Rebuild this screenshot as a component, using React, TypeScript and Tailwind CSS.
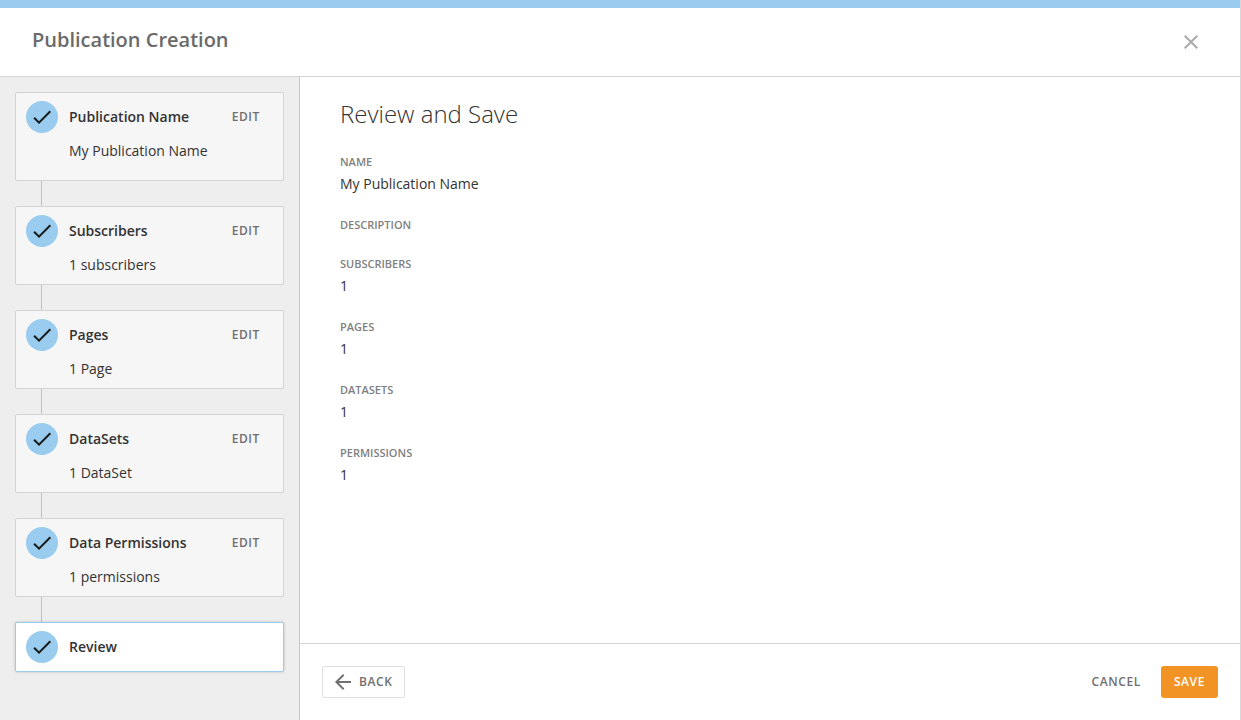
import React from "react";

type Step = { title: string; summary?: string; tall?: boolean };

const steps: Step[] = [
  { title: "Publication Name", summary: "My Publication Name", tall: true },
  { title: "Subscribers", summary: "1 subscribers" },
  { title: "Pages", summary: "1 Page" },
  { title: "DataSets", summary: "1 DataSet" },
  { title: "Data Permissions", summary: "1 permissions" },
  { title: "Review" },
];

const details = [
  { label: "NAME", value: "My Publication Name" },
  { label: "DESCRIPTION", value: "" },
  { label: "SUBSCRIBERS", value: "1" },
  { label: "PAGES", value: "1" },
  { label: "DATASETS", value: "1" },
  { label: "PERMISSIONS", value: "1" },
];

function CheckBadge() {
  return (
    <span className="flex size-8 shrink-0 items-center justify-center rounded-full bg-[#99ccee]">
      <svg viewBox="0 0 24 24" className="size-6" fill="#1a1a1a" aria-hidden="true">
        <path d="M9 16.17 4.83 12l-1.42 1.41L9 19 21 7l-1.41-1.41z" />
      </svg>
    </span>
  );
}

function StepCard({ step }: { step: Step }) {
  if (!step.summary) {
    return (
      <li
        aria-current="step"
        className="flex items-center gap-[11px] rounded-xs border border-[#99ccee] bg-white py-2 pl-[10px] shadow-[0_0_3px_rgba(0,0,0,0.2)]"
      >
        <CheckBadge />
        <h2 className="text-sm font-semibold">{step.title}</h2>
      </li>
    );
  }
  return (
    <li>
      <div
        className={
          step.tall
            ? "rounded-xs border border-[#d4d4d4] bg-[#f6f6f6] pt-2 pb-[19px]"
            : "rounded-xs border border-[#d4d4d4] bg-[#f6f6f6] pt-2 pb-[9px]"
        }
      >
        <div className="flex items-center gap-[11px] pr-[23px] pl-[10px]">
          <CheckBadge />
          <h2 className="flex-1 text-sm font-semibold">{step.title}</h2>
          <button type="button" aria-label={"Edit " + step.title} className="text-xs font-semibold tracking-wider text-[#707070]">
            EDIT
          </button>
        </div>
        <p className="mt-2 pl-[53px] text-sm">{step.summary}</p>
      </div>
      <div className="ml-[26px] h-[25px] w-px bg-[#99ccee]" />
    </li>
  );
}

export default function App() {
  return (
    <div className="flex min-h-screen flex-col border-r border-[#d8d8d8] bg-white font-['Open_Sans',sans-serif] text-[#333]">
      <header className="flex h-[77px] items-center justify-between border-t-8 border-b border-t-[#99ccee] border-b-[#d4d4d4] pr-[37px] pl-8">
        <h1 className="pb-1 text-xl font-semibold text-[#6a6a6a]">Publication Creation</h1>
        <button type="button" aria-label="Close" className="flex size-6 items-center justify-center">
          <svg viewBox="0 0 24 24" className="size-6" fill="#aaa" aria-hidden="true">
            <path d="M19 6.41 17.59 5 12 10.59 6.41 5 5 6.41 10.59 12 5 17.59 6.41 19 12 13.41 17.59 19 19 17.59 13.41 12z" />
          </svg>
        </button>
      </header>
      <div className="flex flex-1">
        <aside className="w-[300px] shrink-0 border-r border-[#c8c8c8] bg-[#eee] p-[15px]">
          <ol>
            {steps.map((step) => (
              <StepCard key={step.title} step={step} />
            ))}
          </ol>
        </aside>
        <div className="flex min-w-0 flex-1 flex-col">
          <main className="flex-1 px-10 pt-5">
            <h2 className="text-2xl leading-[34px] font-light">Review and Save</h2>
            <dl className="mt-[23px] flex flex-col gap-[23px]">
              {details.map((d) => (
                <div key={d.label}>
                  <dt className="text-[11px] leading-4 font-semibold text-[#808080]">{d.label}</dt>
                  {d.value && <dd className="mt-1 text-sm leading-5">{d.value}</dd>}
                </div>
              ))}
            </dl>
          </main>
          <footer className="flex items-center border-t border-[#d4d4d4] p-[22px] text-xs font-semibold tracking-wider text-[#707070]">
            <button type="button" className="flex h-8 items-center gap-1 rounded-xs border border-[#e0e0e0] pr-[11px] pl-2">
              <svg viewBox="0 0 24 24" className="size-6" fill="currentColor" aria-hidden="true">
                <path d="M20 11H7.83l5.59-5.59L12 4l-8 8 8 8 1.41-1.41L7.83 13H20z" />
              </svg>
              BACK
            </button>
            <button type="button" className="mr-5 ml-auto h-8">CANCEL</button>
            <button type="button" className="h-8 rounded-[3px] bg-[#f29325] px-[13px] text-white">SAVE</button>
          </footer>
        </div>
      </div>
    </div>
  );
}
